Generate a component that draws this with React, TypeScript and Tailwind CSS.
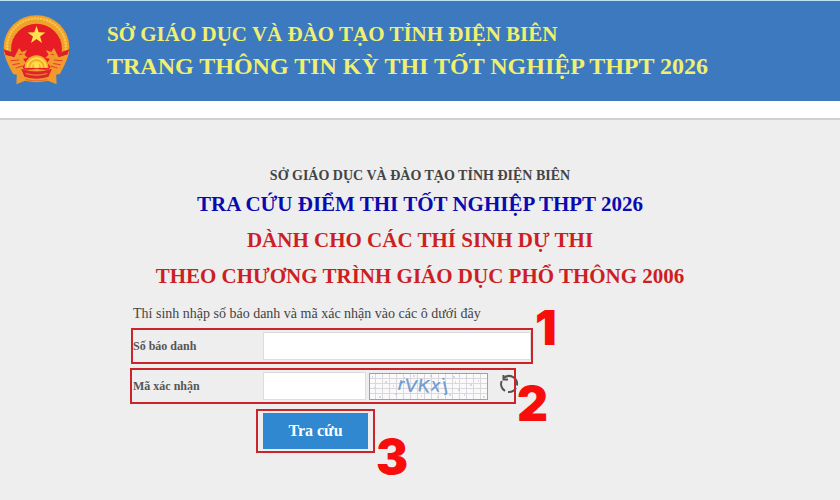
import { FormEvent, useState } from "react"

const beads = Array.from({ length: 44 }, (_, i) => {
  const angle = ((140 + (i * 260) / 43) * Math.PI) / 180
  return { x: 50 + 44 * Math.cos(angle), y: 48 + 43 * Math.sin(angle) }
})

function Emblem() {
  return (
    <svg viewBox="0 0 100 104" className="h-[70px] w-[67px] shrink-0" role="img" aria-label="Quốc huy">
      <ellipse cx="50" cy="48" rx="49" ry="48" fill="#f0a02c" />
      {beads.map((bead, i) => (
        <circle key={i} cx={bead.x} cy={bead.y} r="2" fill="#f7c544" />
      ))}
      <ellipse cx="50" cy="50" rx="38" ry="37" fill="#e81c24" />
      <path d="M50 16l3.300 9.500 10 .2-8 6.100 2.900 9.600L50 35.700l-8.200 5.700 2.900-9.600-8-6.100 10-.2z" fill="#fde44c" />
      <path d="M1 51l15 5 14 2-13 5L4 60z" fill="#d9232a" />
      <path d="M99 51l-15 5-14 2 13 5 13-4z" fill="#d9232a" />
      <path d="M4 60l13 3 7-14 4 6 8-3-4 7 5 5-7 1 4 6-5 6 3 5-5 8-12-2C10 78 5 70 4 60z" fill="#f39a2d" />
      <path d="M96 60l-13 3-7-14-4 6-8-3 4 7-5 5 7 1-4 6 5 6-3 5 5 8 12-2c5-10 10-18 11-28z" fill="#f39a2d" />
      <path d="M11 68l13-1M14 74l11-2M19 79l10-3M24 59l5-1M89 68l-13-1M86 74l-11-2M81 79l-10-3M76 59l-5-1" stroke="#e2402a" strokeWidth="1.500" />
      <path d="M32 79a18 19 0 0 1 36 0z" fill="#f6ad2e" />
      <path d="M36 78a14 14 0 0 1 28 0M42 78a8 8 0 0 1 16 0" fill="none" stroke="#fbe04b" strokeWidth="2.500" />
      <circle cx="50" cy="75" r="4" fill="#fde04b" />
      <path d="M21 78q12 6 29 2q17 4 29-2l1 25-13-5q-17 4-34 0l-13 5z" fill="#f09a2e" />
      <path d="M27 80q23 8 46 0l-5 12q-18 6-36 0z" fill="#dc262a" />
      <path d="M34 96q16 4 32 0" stroke="#e0702a" strokeWidth="1.500" fill="none" />
      <path d="M34 87q16 5 32 0" stroke="#f08a3a" strokeWidth="1.500" fill="none" />
    </svg>
  )
}

function Captcha() {
  return (
    <svg viewBox="0 0 119 27" className="h-[27px] w-[119px] shrink-0 bg-[#fafafa] outline -outline-offset-1 outline-[#a0a0a0]" role="img" aria-label="Mã xác nhận">
      <path
        d="M6.500 0v27M13.500 0v27M20.500 0v27M27.500 0v27M34.500 0v27M41.500 0v27M48.500 0v27M55.500 0v27M62.500 0v27M69.500 0v27M76.500 0v27M83.500 0v27M90.500 0v27M97.500 0v27M104.500 0v27M111.500 0v27M0 5.500h119M0 10.500h119M0 15.500h119M0 20.500h119"
        stroke="#dcd7db"
        strokeWidth="1"
      />
      <path
        d="M3 4h1M10 24h2M16 9h2M24 13h1M26 21h2M35 5h1M44 3h2M52 23h1M61 3h2M68 24h1M80 22h2M86 9h1M89 17h2M97 5h1M101 12h2M109 8h1M114 24h2M84 4h2M95 22h1M5 15h1"
        stroke="#a9b9e2"
        strokeWidth="1"
      />
      <g fill="#6e9bd2" stroke="#6e9bd2" strokeWidth=".3" fontSize="18" className="font-['Liberation_Sans',sans-serif]">
        <text x="29" y="17" transform="rotate(14 32 13)">r</text>
        <text x="36" y="19" transform="rotate(8 42 13)">V</text>
        <text x="49" y="19" transform="rotate(8 55 13)">K</text>
        <text x="62" y="18" transform="rotate(10 66 13)">x</text>
        <text x="74" y="18" transform="rotate(-12 76 13)">j</text>
      </g>
    </svg>
  )
}

const frame = "pointer-events-none absolute border-2 border-[#c9252b]"
const step = "pointer-events-none absolute font-['Inter',sans-serif] text-5xl leading-none font-black text-[#f80d0d]"

export default function App() {
  const [candidate, setCandidate] = useState("")
  const [code, setCode] = useState("")

  const onSubmit = (e: FormEvent<HTMLFormElement>) => {
    e.preventDefault()
  }

  return (
    <div className="min-h-screen bg-[#eeeeee] font-['Liberation_Serif',serif] text-[#444444]">
      <header className="border-t border-[#b9e3f5] bg-white">
        <div className="flex h-[100px] items-start gap-[37px] bg-[#3d79bf] pt-[14px] pl-[3px]">
          <Emblem />
          <div className="pt-[3px] font-bold text-[#f0f070]">
            <p className="text-[21px] leading-8">SỞ GIÁO DỤC VÀ ĐÀO TẠO TỈNH ĐIỆN BIÊN</p>
            <p className="text-2xl leading-8">TRANG THÔNG TIN KỲ THI TỐT NGHIỆP THPT 2026</p>
          </div>
        </div>
        <div className="h-[19px] border-b-2 border-[#d0d0d0]" />
      </header>

      <main className="pt-11">
        <div className="text-center font-bold">
          <h2 className="text-sm leading-6">SỞ GIÁO DỤC VÀ ĐÀO TẠO TỈNH ĐIỆN BIÊN</h2>
          <h1 className="text-[21px] leading-8 text-[#0a0aae]">TRA CỨU ĐIỂM THI TỐT NGHIỆP THPT 2026</h1>
          <p className="pt-1 text-[21px] leading-8 text-[#cc1f24]">DÀNH CHO CÁC THÍ SINH DỰ THI</p>
          <p className="pt-1 text-[21px] leading-8 text-[#cc1f24]">THEO CHƯƠNG TRÌNH GIÁO DỤC PHỔ THÔNG 2006</p>
        </div>

        <form onSubmit={onSubmit} className="mx-auto max-w-[574px] pt-[10px]">
          <p className="text-sm leading-6">Thí sinh nhập số báo danh và mã xác nhận vào các ô dưới đây</p>

          <div className="relative mt-[6px] flex w-[398px] items-center">
            <label htmlFor="candidate" className="w-[130px] shrink-0 text-xs font-bold text-[#555555]">Số báo danh</label>
            <input
              id="candidate"
              type="text"
              value={candidate}
              onChange={(e) => setCandidate(e.target.value)}
              className="h-7 min-w-0 flex-1 border border-[#dddddd] bg-white px-2 text-sm outline-none"
            />
            <span className={`${frame} -inset-x-0.5 -inset-y-1`} />
            <span className={`${step} -top-7 left-full ml-1`}>1</span>
          </div>

          <div className="relative mt-3 flex w-[380px] items-center">
            <label htmlFor="code" className="w-[130px] shrink-0 text-xs font-bold text-[#555555]">Mã xác nhận</label>
            <input
              id="code"
              type="text"
              value={code}
              onChange={(e) => setCode(e.target.value)}
              className="mr-[3px] h-7 w-[103px] border border-[#dddddd] bg-white px-2 text-sm outline-none"
            />
            <Captcha />
            <button type="button" aria-label="Đổi mã xác nhận" className="-mr-[6px] mb-1 ml-auto shrink-0">
              <svg viewBox="0 0 20 20" className="size-5" fill="none" stroke="#555555" strokeWidth="2">
                <path d="M2.600 7A8 8 0 0 0 6 16.900" />
                <path d="M9 18A8 8 0 0 0 17 13.800" />
                <path d="M17.900 11.500A8 8 0 0 0 5 3.800" />
                <path d="M4.500 1v4.500h4.500" />
              </svg>
            </button>
            <span className={`${frame} -inset-x-[3px] -inset-y-1`} />
            <span className={`${step} top-2 left-full ml-1`}>2</span>
          </div>

          <div className="relative mt-[13px] ml-[130px] w-[105px]">
            <button type="submit" className="block h-9 w-full bg-[#3088d0] text-base font-bold text-white">Tra cứu</button>
            <span className={`${frame} -inset-x-[7px] -inset-y-1`} />
            <span className={`${step} top-5 left-full ml-2`}>3</span>
          </div>
        </form>
      </main>
    </div>
  )
}
